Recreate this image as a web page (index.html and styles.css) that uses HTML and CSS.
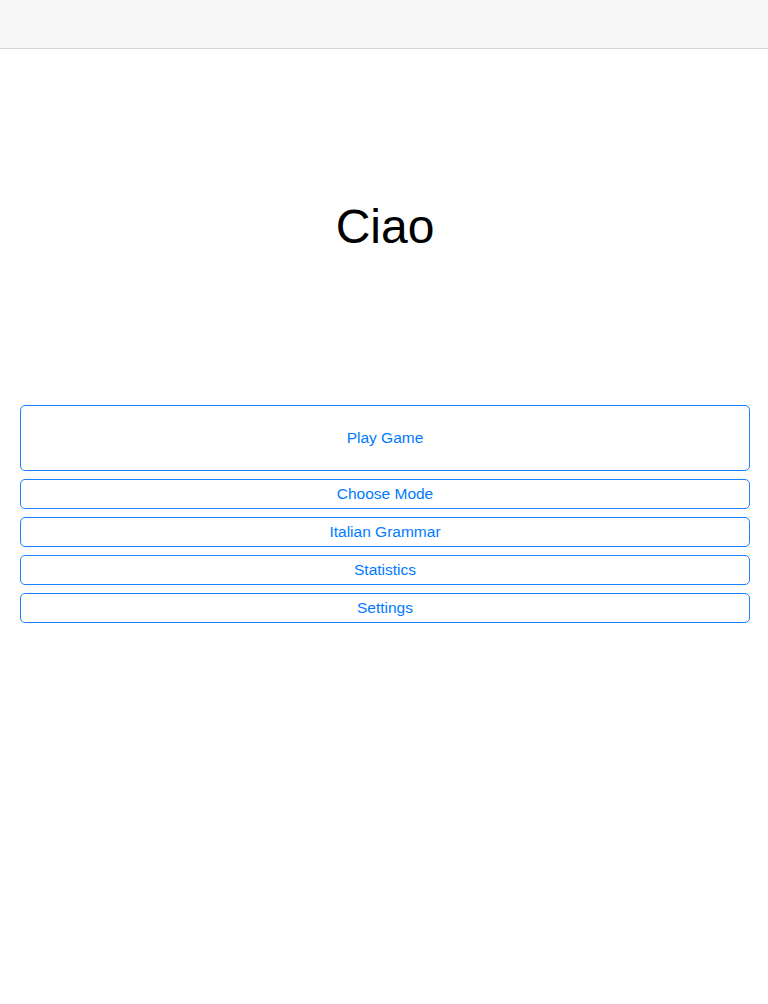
FILE: index.html
```html
<!DOCTYPE html>
<html>
<head>
<meta charset="utf-8">
<link rel="stylesheet" href="styles.css">
</head>
<body>
<header class="navbar"></header>
<main class="content">
  <section class="hero">
    <h1 class="title">Ciao</h1>
  </section>
  <nav class="menu">
    <button class="btn btn-large">Play Game</button>
    <button class="btn">Choose Mode</button>
    <button class="btn">Italian Grammar</button>
    <button class="btn">Statistics</button>
    <button class="btn">Settings</button>
  </nav>
</main>
</body>
</html>
```
FILE: styles.css
```css
html, body {
  margin: 0;
  padding: 0;
  background: #ffffff;
  font-family: "Liberation Sans", Arial, sans-serif;
}

.navbar {
  height: 48px;
  background: #f7f7f7;
  border-bottom: 1px solid #d6d6d6;
}

.content {
  display: flex;
  flex-direction: column;
}

.hero {
  height: 356px;
  display: flex;
  align-items: center;
  justify-content: center;
}

.title {
  margin: 0;
  font-weight: normal;
  font-size: 48px;
  line-height: 1;
  color: #000;
  padding-left: 2px;
}

.menu {
  display: flex;
  flex-direction: column;
  gap: 8px;
  padding: 0 18px 0 20px;
}

.btn {
  height: 30px;
  margin: 0;
  padding: 0 0 1px;
  background: #fff;
  border: 1px solid #1a82fb;
  border-radius: 5px;
  color: #007aff;
  font-family: "Liberation Sans", Arial, sans-serif;
  font-size: 15.5px;
  text-align: center;
}

.btn-large {
  height: 66px;
}
```
